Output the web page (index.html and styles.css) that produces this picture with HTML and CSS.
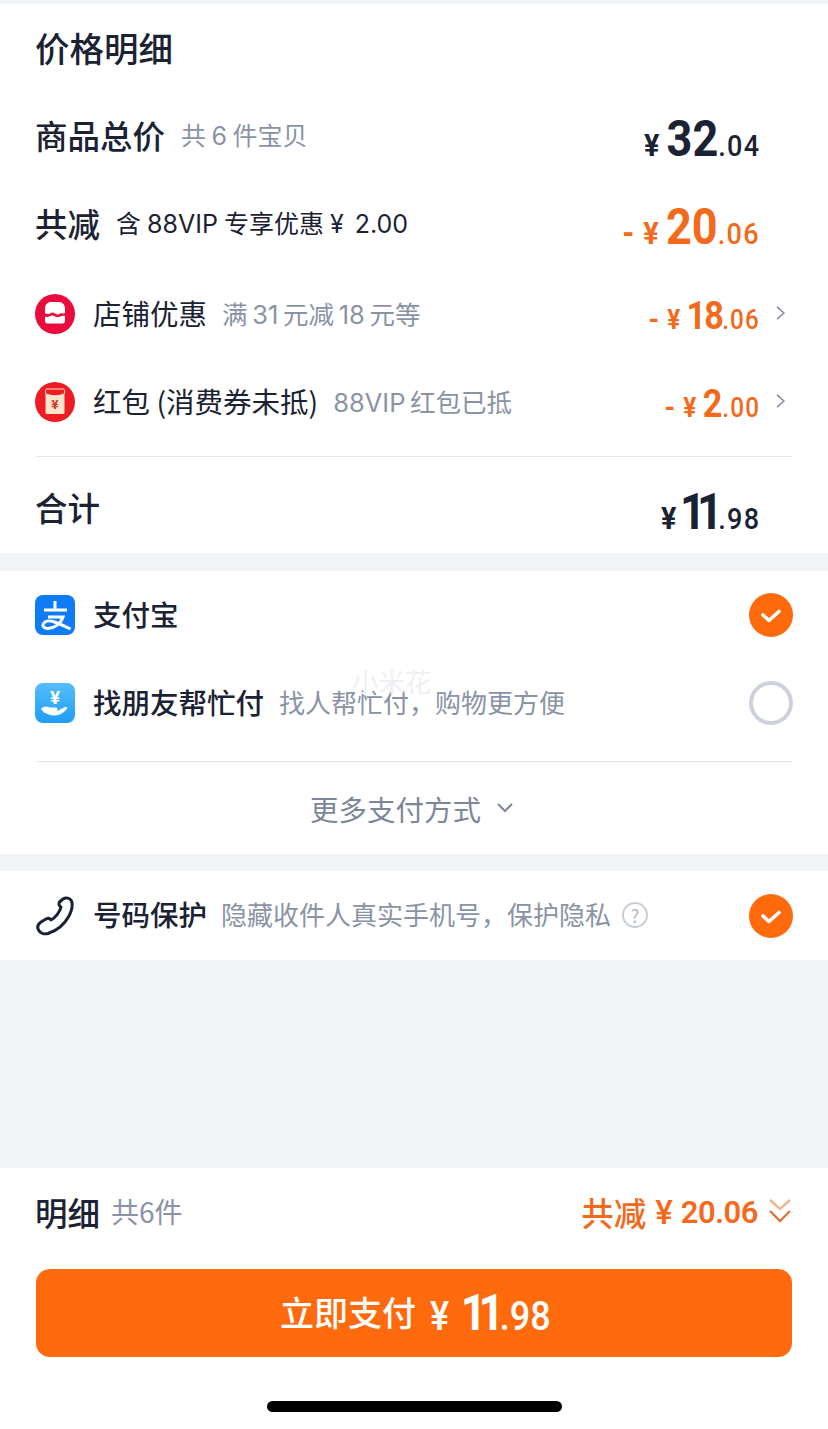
FILE: index.html
```html
<!DOCTYPE html>
<html lang="zh-CN">
<head>
    <meta charset="UTF-8">
    <meta name="viewport" content="width=device-width, initial-scale=1.0">
    <title>价格明细</title>
    <link rel="stylesheet" href="styles.css">
</head>
<body>
    <div class="page">
        <section class="card price-card">
            <h1 class="title">价格明细</h1>

            <div class="row">
                <div class="row-left">
                    <span class="label-big">商品总价</span>
                    <span class="sub sub-top sub-count">共 6 件宝贝</span>
                </div>
                <div class="amount amount-lg"><span class="yen">¥</span><span class="int">32</span><span class="dec">.04</span></div>
            </div>

            <div class="row">
                <div class="row-left">
                    <span class="label-big">共减</span>
                    <span class="sub sub-top sub-dark">含 88VIP 专享优惠 ¥ <span class="sub-num">2.00</span></span>
                </div>
                <div class="amount amount-lg orange"><span class="minus">-</span><span class="yen">¥</span><span class="int">20</span><span class="dec">.06</span></div>
            </div>

            <div class="row discount-first">
                <div class="row-left">
                    <svg class="icon" viewBox="0 0 40 40">
                        <circle cx="20" cy="20" r="20" fill="#e90b3e"/>
                        <path d="M10 19v-4c0-5 3-7 6-7h8c3 0 6 2 6 7v4c-2 1.500-3-.5-5 .5s-3 1.500-5 0-3-1-5 0-3 .5-5-.5z" fill="#fff"/>
                        <path d="M10 22.500c2 1 3 .5 5-.5s3-.5 5 .5 3 1 5 0 3-1 5-.5V27c0 1.500-1 2.500-2.500 2.500h-15C11 29.500 10 28.500 10 27z" fill="#fff"/>
                    </svg>
                    <span class="label">店铺优惠</span>
                    <span class="sub">满 31 元减 18 元等</span>
                </div>
                <div class="amount-wrap">
                    <div class="amount amount-md orange"><span class="minus">-</span><span class="yen">¥</span><span class="int narrow">18</span><span class="dec">.06</span></div>
                    <svg class="chevron" viewBox="0 0 10 16"><path d="M1 1l8 7-8 7" fill="none" stroke="#7d8699" stroke-width="1.600"/></svg>
                </div>
            </div>

            <div class="row">
                <div class="row-left">
                    <svg class="icon" viewBox="0 0 40 40">
                        <circle cx="20" cy="20" r="20" fill="#ee1c25"/>
                        <rect x="10.500" y="7" width="19" height="25" rx="1.500" fill="#fde3c8"/>
                        <path d="M10.500 8.500c0-1 .5-1.500 1.500-1.500h16c1 0 1.500 .5 1.500 1.500v3c-6 3-13 3-19 0z" fill="#ee1c25" stroke="#fde3c8" stroke-width="1"/>
                        <text x="20" y="27" class="packet-yen">¥</text>
                    </svg>
                    <span class="label">红包 (消费券未抵)</span>
                    <span class="sub">88VIP 红包已抵</span>
                </div>
                <div class="amount-wrap">
                    <div class="amount amount-md orange"><span class="minus">-</span><span class="yen">¥</span><span class="int">2</span><span class="dec">.00</span></div>
                    <svg class="chevron" viewBox="0 0 10 16"><path d="M1 1l8 7-8 7" fill="none" stroke="#7d8699" stroke-width="1.600"/></svg>
                </div>
            </div>

            <div class="row total-row">
                <span class="label-big">合计</span>
                <div class="amount amount-lg"><span class="yen">¥</span><span class="int narrow">11</span><span class="dec">.98</span></div>
            </div>
        </section>

        <section class="card pay-card">
            <div class="row pay-row">
                <div class="row-left">
                    <svg class="icon" viewBox="0 0 40 40">
                        <rect width="40" height="40" rx="8" fill="#0f7bf5"/>
                        <path d="M9 15h23M20 6v9M13 22h15c-2.500 7-9 11.500-15 11.500-4 0-6-2.500-4.500-5 2-3 7-3 11-1.500s10 4 16 7" fill="none" stroke="#fff" stroke-width="3"/>
                    </svg>
                    <span class="label label-strong">支付宝</span>
                </div>
                <svg class="check" viewBox="0 0 44 44">
                    <circle cx="22" cy="22" r="22" fill="#ff6a0d"/>
                    <path d="M14 22l6 5.500 10-9" fill="none" stroke="#fff" stroke-width="3.600" stroke-linecap="round" stroke-linejoin="round"/>
                </svg>
            </div>
            <div class="row pay-row">
                <div class="row-left">
                    <svg class="icon" viewBox="0 0 40 40">
                        <defs>
                            <linearGradient id="handBg" x1="0" y1="0" x2="0" y2="1">
                                <stop offset="0" stop-color="#55bdfb"/>
                                <stop offset="1" stop-color="#1f9df6"/>
                            </linearGradient>
                        </defs>
                        <rect width="40" height="40" rx="8" fill="url(#handBg)"/>
                        <text x="20" y="21" class="hand-yen">¥</text>
                        <path d="M6 26c3-3 6-3 9-1.500h6c2 0 2 3 0 3h-4 6l7-3.500c2-.5 3 1 1.500 2.500-3 3-7 6-12 6-5 0-7-2-10-2.500z" fill="#fff"/>
                    </svg>
                    <span class="label label-strong">找朋友帮忙付</span>
                    <span class="sub sub-plain">找人帮忙付，购物更方便</span>
                </div>
                <span class="radio"></span>
            </div>
            <div class="more">
                <span>更多支付方式</span>
                <svg class="more-arrow" viewBox="0 0 18 12"><path d="M2 2l7 7 7-7" fill="none" stroke="#7d8699" stroke-width="2"/></svg>
            </div>
            <span class="watermark">小米花</span>
        </section>

        <section class="card protect-card">
            <div class="row-left">
                <svg class="icon" viewBox="0 0 40 40">
                    <path d="M28 3C31 1 35 2 36.500 5 38 9 37 14 34 20 29 29 21 35 13 37.500 9 38.500 5 37 3.500 34 2 31 3 28 6 26l5-3c2-1 4-.5 5 1 4-2 9-8 10-13-2-1-2.500-3-1.500-5z" fill="none" stroke="#1b2233" stroke-width="3" stroke-linejoin="round"/>
                </svg>
                <span class="label label-strong">号码保护</span>
                <span class="sub sub-plain">隐藏收件人真实手机号，保护隐私</span>
                <span class="help">?</span>
            </div>
            <svg class="check" viewBox="0 0 44 44">
                <circle cx="22" cy="22" r="22" fill="#ff6a0d"/>
                <path d="M14 22l6 5.500 10-9" fill="none" stroke="#fff" stroke-width="3.600" stroke-linecap="round" stroke-linejoin="round"/>
            </svg>
        </section>

        <div class="spacer"></div>

        <footer class="bottom">
            <div class="bottom-info">
                <div class="row-left">
                    <span class="label-big">明细</span>
                    <span class="count">共6件</span>
                </div>
                <div class="saved">
                    <span class="saved-text">共减</span>
                    <span class="saved-yen">¥</span>
                    <span class="saved-num">20.06</span>
                    <svg class="double-arrow" viewBox="0 0 24 26">
                        <path d="M2 2l10 9 10-9" fill="none" stroke="#eeb78f" stroke-width="2.400"/>
                        <path d="M2 13l10 10 10-10" fill="none" stroke="#d9773c" stroke-width="2.400"/>
                    </svg>
                </div>
            </div>
            <button class="pay-btn">
                <span class="pay-text">立即支付</span>
                <span class="pay-amount"><span class="yen">¥</span><span class="int">11</span><span class="dec">.98</span></span>
            </button>
            <div class="home-bar"></div>
        </footer>
    </div>
</body>
</html>
```

FILE: styles.css
```css
* {
    box-sizing: border-box;
}
body {
    margin: 0;
    background-color: #f1f4f7;
    font-family: "Noto Sans CJK SC", "Noto Sans", sans-serif;
    color: #1b2233;
}
.page {
    width: 828px;
    height: 1429px;
    padding-top: 4px;
    display: flex;
    flex-direction: column;
}
.card {
    background-color: #fff;
    padding: 0 36px;
    position: relative;
}
.price-card {
    height: 549px;
    margin-bottom: 18px;
}
.title {
    margin: 0 0 0 -1px;
    height: 86px;
    display: flex;
    align-items: center;
    font-size: 34.500px;
    font-weight: 500;
}
.row {
    height: 88px;
    display: flex;
    justify-content: space-between;
    align-items: center;
}
.row-left {
    display: flex;
    align-items: center;
}
.discount-first {
    margin-top: 4px;
}
.label-big {
    font-size: 32.500px;
    font-weight: 500;
    margin-left: -1px;
}
.label {
    font-size: 28.500px;
    margin-left: 18px;
    margin-bottom: 4px;
}
.label-strong {
    font-weight: 500;
}
.sub {
    font-family: Inter, "Noto Sans CJK SC", sans-serif;
    font-size: 25.500px;
    color: #8a93a5;
    margin-left: 15px;
    margin-bottom: 4px;
    word-spacing: -2.500px;
}
.sub-top {
    font-size: 25px;
    margin-bottom: 0;
    word-spacing: -1px;
    margin-left: 16px;
}
.sub-count {
    word-spacing: -1.500px;
}
.sub-num {
    margin-left: 5px;
}
.sub-plain {
    font-size: 26px;
}
.sub-dark {
    color: #1b2233;
}
.icon {
    width: 40px;
    height: 40px;
    flex-shrink: 0;
    margin-left: -1px;
}
.packet-yen {
    font-family: "Roboto", sans-serif;
    font-size: 13px;
    font-weight: 700;
    fill: #d8342a;
    text-anchor: middle;
}
.hand-yen {
    font-family: "Roboto", sans-serif;
    font-size: 19px;
    font-weight: 700;
    fill: #fff;
    text-anchor: middle;
}

/* price numbers, Roboto squeezed a bit to get near the app's narrow digits */
.amount {
    display: flex;
    align-items: baseline;
    font-family: "Roboto", sans-serif;
    font-weight: 500;
    margin-right: 32px;
    position: relative;
    top: 5px;
    transform: scaleX(.9);
    transform-origin: right center;
}
.amount .int {
    font-weight: 700;
}
.amount .yen,
.amount .minus {
    font-weight: 700;
}
.amount-lg .int {
    font-size: 50px;
}
.amount-lg .int.narrow {
    letter-spacing: -10px;
}
.amount-lg .int.narrow + .dec {
    margin-left: 5px;
}
.amount-lg .dec {
    font-size: 30px;
    letter-spacing: 1.500px;
}
.amount-lg .yen {
    font-size: 32px;
    margin-right: 8px;
}
.total-row .amount-lg .yen {
    margin-right: 4px;
}
.amount-lg .minus {
    font-size: 34px;
    margin-right: 10px;
}
.amount-md {
    top: 2px;
}
.amount-md .int {
    font-size: 38px;
}
.amount-md .int.narrow {
    letter-spacing: -2px;
}
.amount-md .dec {
    font-size: 27px;
    letter-spacing: 1.300px;
}
.amount-md .yen {
    font-size: 27px;
    margin-right: 7px;
}
.amount-md .minus {
    font-size: 30px;
    margin-right: 9px;
}
.amount-wrap {
    display: flex;
    align-items: center;
}
.amount-wrap .amount {
    margin-right: 16px;
}
.chevron {
    width: 9px;
    height: 14px;
    margin-right: 7px;
    margin-top: -2px;
}
.orange {
    color: #f26a1b;
}
.total-row {
    border-top: 1px solid #e5e7eb;
    margin-top: 10px;
    padding-top: 2px;
    height: 97px;
}
.total-row .amount {
    top: 6px;
}

/* payment */
.pay-card {
    height: 283px;
    margin-bottom: 17px;
}
.pay-row {
    height: 88px;
}
.check {
    width: 44px;
    height: 44px;
    margin-right: -1px;
}
.radio {
    width: 44px;
    height: 44px;
    margin-right: -1px;
    border: 4px solid #cdd1dc;
    border-radius: 50%;
}
.more {
    margin-top: 14px;
    height: 93px;
    padding-right: 4px;
    border-top: 1px solid #e5e7eb;
    display: flex;
    justify-content: center;
    align-items: center;
    color: #7d8699;
    font-size: 28.500px;
}
.more-arrow {
    width: 18px;
    height: 12px;
    margin-left: 15px;
}
.watermark {
    position: absolute;
    left: 352px;
    top: 90px;
    font-size: 26.500px;
    color: #eef0f3;
}

.protect-card {
    height: 89px;
    display: flex;
    justify-content: space-between;
    align-items: center;
}
.protect-card .sub {
    margin-left: 14px;
}
.help {
    width: 26px;
    height: 26px;
    margin-left: 11px;
    margin-bottom: 2px;
    border: 2px solid #c9cdd6;
    border-radius: 50%;
    color: #b4b9c4;
    font-size: 18px;
    line-height: 22px;
    text-align: center;
}
.spacer {
    height: 208px;
}

/* bottom bar */
.bottom {
    flex: 1;
    background-color: #fff;
    padding: 0 36px;
}
.bottom-info {
    height: 86px;
    display: flex;
    justify-content: space-between;
    align-items: center;
}
.count {
    font-size: 28px;
    color: #8a93a5;
    margin-left: 11px;
}
.saved {
    display: flex;
    align-items: center;
    color: #f26a1b;
}
.saved-text {
    font-size: 32.500px;
    font-weight: 500;
}
.saved-yen {
    font-family: "Roboto", sans-serif;
    font-size: 33px;
    font-weight: 500;
    margin-left: 9px;
    margin-top: 3px;
}
.saved-num {
    font-family: "Roboto", sans-serif;
    font-size: 31px;
    font-weight: 600;
    letter-spacing: -.5px;
    margin-left: 8px;
    margin-top: 3px;
}
.double-arrow {
    width: 24px;
    height: 26px;
    margin-left: 10px;
}
.pay-btn {
    width: 756px;
    height: 88px;
    margin-top: 15px;
    padding: 0;
    border: none;
    border-radius: 14px;
    background-color: #ff6a0d;
    color: #fff;
    display: flex;
    justify-content: center;
    align-items: center;
    gap: 14px;
}
.pay-text {
    font-family: "Noto Sans CJK SC", sans-serif;
    font-size: 34px;
    font-weight: 500;
    margin-bottom: 4px;
}
.pay-amount {
    display: flex;
    align-items: baseline;
    font-family: "Roboto", sans-serif;
    transform: scaleX(.9);
    transform-origin: left center;
    margin-right: -16px;
}
.pay-btn .yen {
    font-size: 40px;
    font-weight: 500;
    margin-right: 13px;
}
.pay-btn .int {
    font-size: 50px;
    font-weight: 700;
    letter-spacing: -9px;
}
.pay-btn .dec {
    font-size: 40px;
    font-weight: 500;
    margin-left: 4px;
}
.home-bar {
    width: 295px;
    height: 11px;
    margin: 44px auto 0;
    background-color: #000;
    border-radius: 6px;
}
```
